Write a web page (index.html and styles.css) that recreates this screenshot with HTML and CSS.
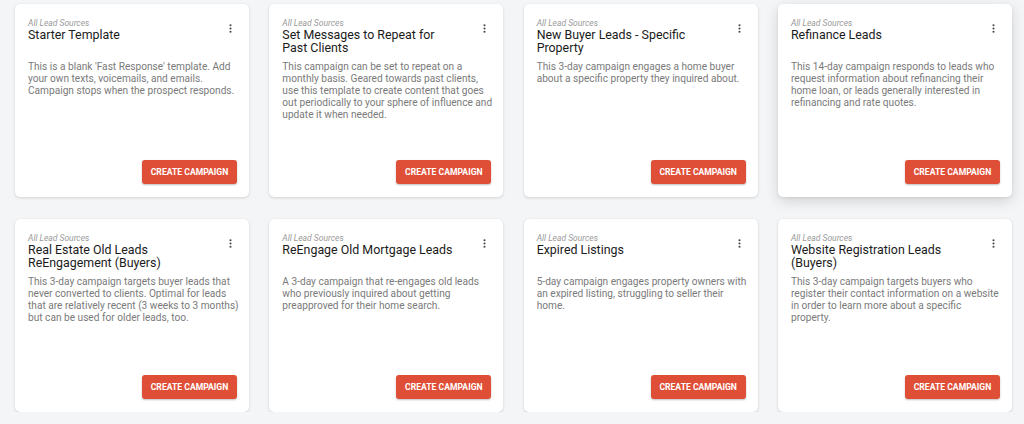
FILE: index.html
```html
<!DOCTYPE html>
<html lang="en">
<head>
<meta charset="utf-8">
<title>Campaign Templates</title>
<link rel="stylesheet" href="styles.css">
</head>
<body>
<div class="grid">
  <div class="card">
    <div class="head">
      <div class="titles">
        <div class="source">All Lead Sources</div>
        <div class="title">Starter Template</div>
      </div>
      <svg class="more" viewBox="0 0 24 24"><circle cx="12" cy="5" r="2.3"/><circle cx="12" cy="12" r="2.3"/><circle cx="12" cy="19" r="2.3"/></svg>
    </div>
    <p class="desc">This is a blank 'Fast Response' template. Add your own texts, voicemails, and emails. Campaign stops when the prospect responds.</p>
    <div class="actions"><button class="btn">CREATE CAMPAIGN</button></div>
  </div>
  <div class="card">
    <div class="head">
      <div class="titles">
        <div class="source">All Lead Sources</div>
        <div class="title">Set Messages to Repeat for Past Clients</div>
      </div>
      <svg class="more" viewBox="0 0 24 24"><circle cx="12" cy="5" r="2.3"/><circle cx="12" cy="12" r="2.3"/><circle cx="12" cy="19" r="2.3"/></svg>
    </div>
    <p class="desc">This campaign can be set to repeat on a monthly basis. Geared towards past clients, use this template to create content that goes out periodically to your sphere of influence and update it when needed.</p>
    <div class="actions"><button class="btn">CREATE CAMPAIGN</button></div>
  </div>
  <div class="card">
    <div class="head">
      <div class="titles">
        <div class="source">All Lead Sources</div>
        <div class="title">New Buyer Leads - Specific Property</div>
      </div>
      <svg class="more" viewBox="0 0 24 24"><circle cx="12" cy="5" r="2.3"/><circle cx="12" cy="12" r="2.3"/><circle cx="12" cy="19" r="2.3"/></svg>
    </div>
    <p class="desc">This 3-day campaign engages a home buyer about a specific property they inquired about.</p>
    <div class="actions"><button class="btn">CREATE CAMPAIGN</button></div>
  </div>
  <div class="card card-hover">
    <div class="head">
      <div class="titles">
        <div class="source">All Lead Sources</div>
        <div class="title">Refinance Leads</div>
      </div>
      <svg class="more" viewBox="0 0 24 24"><circle cx="12" cy="5" r="2.3"/><circle cx="12" cy="12" r="2.3"/><circle cx="12" cy="19" r="2.3"/></svg>
    </div>
    <p class="desc">This 14-day campaign responds to leads who request information about refinancing their home loan, or leads generally interested in refinancing and rate quotes.</p>
    <div class="actions"><button class="btn">CREATE CAMPAIGN</button></div>
  </div>
  <div class="card">
    <div class="head">
      <div class="titles">
        <div class="source">All Lead Sources</div>
        <div class="title">Real Estate Old Leads ReEngagement (Buyers)</div>
      </div>
      <svg class="more" viewBox="0 0 24 24"><circle cx="12" cy="5" r="2.3"/><circle cx="12" cy="12" r="2.3"/><circle cx="12" cy="19" r="2.3"/></svg>
    </div>
    <p class="desc">This 3-day campaign targets buyer leads that never converted to clients. Optimal for leads that are relatively recent (3 weeks to 3 months) but can be used for older leads, too.</p>
    <div class="actions"><button class="btn">CREATE CAMPAIGN</button></div>
  </div>
  <div class="card">
    <div class="head">
      <div class="titles">
        <div class="source">All Lead Sources</div>
        <div class="title">ReEngage Old Mortgage Leads</div>
      </div>
      <svg class="more" viewBox="0 0 24 24"><circle cx="12" cy="5" r="2.3"/><circle cx="12" cy="12" r="2.3"/><circle cx="12" cy="19" r="2.3"/></svg>
    </div>
    <p class="desc">A 3-day campaign that re-engages old leads who previously inquired about getting preapproved for their home search.</p>
    <div class="actions"><button class="btn">CREATE CAMPAIGN</button></div>
  </div>
  <div class="card">
    <div class="head">
      <div class="titles">
        <div class="source">All Lead Sources</div>
        <div class="title">Expired Listings</div>
      </div>
      <svg class="more" viewBox="0 0 24 24"><circle cx="12" cy="5" r="2.3"/><circle cx="12" cy="12" r="2.3"/><circle cx="12" cy="19" r="2.3"/></svg>
    </div>
    <p class="desc">5-day campaign engages property owners with an expired listing, struggling to seller their home.</p>
    <div class="actions"><button class="btn">CREATE CAMPAIGN</button></div>
  </div>
  <div class="card">
    <div class="head">
      <div class="titles">
        <div class="source">All Lead Sources</div>
        <div class="title">Website Registration Leads (Buyers)</div>
      </div>
      <svg class="more" viewBox="0 0 24 24"><circle cx="12" cy="5" r="2.3"/><circle cx="12" cy="12" r="2.3"/><circle cx="12" cy="19" r="2.3"/></svg>
    </div>
    <p class="desc">This 3-day campaign targets buyers who register their contact information on a website in order to learn more about a specific property.</p>
    <div class="actions"><button class="btn">CREATE CAMPAIGN</button></div>
  </div>
</div>
</body>
</html>
```
FILE: styles.css
```css
html, body {
  margin: 0;
  padding: 0;
  background: #f4f5f7;
  font-family: Roboto, "Liberation Sans", Arial, sans-serif;
}
.grid {
  display: grid;
  grid-template-columns: repeat(4, 234px);
  grid-auto-rows: 193px;
  column-gap: 20.33px;
  row-gap: 22px;
  padding: 4px 0 0 15px;
}
.card {
  background: #fff;
  border-radius: 5px;
  box-shadow: 0 1px 3px rgba(0, 0, 0, 0.14), 0 0 1px rgba(0, 0, 0, 0.06);
  display: flex;
  flex-direction: column;
  padding: 14px 12px 13px 13px;
  box-sizing: border-box;
}
.card-hover {
  box-shadow: 0 4px 14px rgba(0, 0, 0, 0.14), 0 1px 3px rgba(0, 0, 0, 0.08);
}
.head {
  display: flex;
  align-items: flex-start;
}
.titles {
  flex: 1;
  min-width: 0;
}
.source {
  font-size: 8.5px;
  line-height: 10px;
  font-style: italic;
  color: #9a9a9a;
}
.title {
  font-size: 12.4px;
  line-height: 13px;
  color: #1b1b1b;
  min-height: 26px;
  padding-right: 25px;
}
.more {
  width: 11px;
  height: 11px;
  fill: #4a4a4a;
  margin: 5px 1px 0 0;
  flex: none;
}
.desc {
  margin: 7px -3.5px 0 0;
  font-size: 10.15px;
  line-height: 12px;
  color: #7a7a7a;
}
.actions {
  margin-top: auto;
  display: flex;
  justify-content: flex-end;
}
.btn {
  width: 95px;
  height: 24px;
  border: none;
  border-radius: 3px;
  background: #df4f37;
  color: #fff;
  font-family: Roboto, "Liberation Sans", Arial, sans-serif;
  font-size: 8.6px;
  font-weight: 700;
  letter-spacing: 0;
  padding: 0;
  box-shadow: 0 1px 2px rgba(0, 0, 0, 0.25);
  cursor: pointer;
}
```
